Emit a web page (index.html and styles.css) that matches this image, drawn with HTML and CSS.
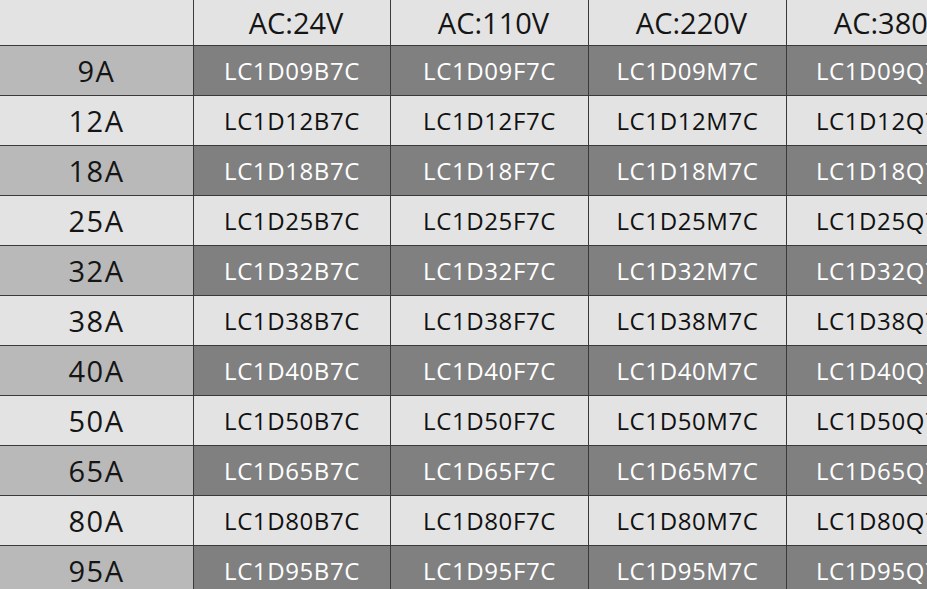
FILE: index.html
```html
<!DOCTYPE html>
<html>
<head>
<meta charset="utf-8">
<link rel="stylesheet" href="styles.css">
</head>
<body>
<table class="grid">
  <colgroup>
    <col class="c0"><col class="c1"><col class="c2"><col class="c2"><col class="c2">
  </colgroup>
  <thead>
    <tr class="head">
      <th></th><th>AC:24V</th><th>AC:110V</th><th>AC:220V</th><th>AC:380V</th>
    </tr>
  </thead>
  <tbody>
    <tr class="dark"><th>9A</th><td>LC1D09B7C</td><td>LC1D09F7C</td><td>LC1D09M7C</td><td>LC1D09Q7C</td></tr>
    <tr class="light"><th>12A</th><td>LC1D12B7C</td><td>LC1D12F7C</td><td>LC1D12M7C</td><td>LC1D12Q7C</td></tr>
    <tr class="dark"><th>18A</th><td>LC1D18B7C</td><td>LC1D18F7C</td><td>LC1D18M7C</td><td>LC1D18Q7C</td></tr>
    <tr class="light"><th>25A</th><td>LC1D25B7C</td><td>LC1D25F7C</td><td>LC1D25M7C</td><td>LC1D25Q7C</td></tr>
    <tr class="dark"><th>32A</th><td>LC1D32B7C</td><td>LC1D32F7C</td><td>LC1D32M7C</td><td>LC1D32Q7C</td></tr>
    <tr class="light"><th>38A</th><td>LC1D38B7C</td><td>LC1D38F7C</td><td>LC1D38M7C</td><td>LC1D38Q7C</td></tr>
    <tr class="dark"><th>40A</th><td>LC1D40B7C</td><td>LC1D40F7C</td><td>LC1D40M7C</td><td>LC1D40Q7C</td></tr>
    <tr class="light"><th>50A</th><td>LC1D50B7C</td><td>LC1D50F7C</td><td>LC1D50M7C</td><td>LC1D50Q7C</td></tr>
    <tr class="dark"><th>65A</th><td>LC1D65B7C</td><td>LC1D65F7C</td><td>LC1D65M7C</td><td>LC1D65Q7C</td></tr>
    <tr class="light"><th>80A</th><td>LC1D80B7C</td><td>LC1D80F7C</td><td>LC1D80M7C</td><td>LC1D80Q7C</td></tr>
    <tr class="dark"><th>95A</th><td>LC1D95B7C</td><td>LC1D95F7C</td><td>LC1D95M7C</td><td>LC1D95Q7C</td></tr>
  </tbody>
</table>
</body>
</html>
```

FILE: styles.css
```css
html, body {
  margin: 0;
  padding: 0;
  background: #e3e3e3;
  overflow: hidden;
  width: 927px;
  height: 589px;
}

.grid {
  border-collapse: collapse;
  table-layout: fixed;
  width: 984px;
  margin-left: -1px;
  margin-top: -1px;
  font-family: "Open Sans", "Noto Sans", sans-serif;
}

.c0 { width: 194px; }
.c1 { width: 197px; }
.c2 { width: 198px; }

.grid th,
.grid td {
  border: 1.5px solid #3a3a3a;
  padding: 0;
  text-align: center;
  white-space: nowrap;
  overflow: hidden;
}

.head th {
  height: 45px;
  background: #e3e3e3;
  color: #151515;
  font-weight: 400;
  font-size: 29px;
  padding-left: 8px;
  line-height: 45px;
}

.head th:first-child { padding-left: 0; }

tbody tr { height: 50px; }

tbody th {
  font-weight: 400;
  font-size: 29px;
  letter-spacing: 1.5px;
  color: #151515;
  padding-top: 8px;
  padding-right: 6px;
  line-height: 40px;
}

tbody td {
  font-size: 24px;
  letter-spacing: 0.6px;
  line-height: 46px;
  padding-top: 4px;
}

.dark th { background: #b9b9b9; }
.dark td { background: #808080; color: #ffffff; }

.light th { background: #e3e3e3; }
.light td { background: #e3e3e3; color: #111111; }
```
